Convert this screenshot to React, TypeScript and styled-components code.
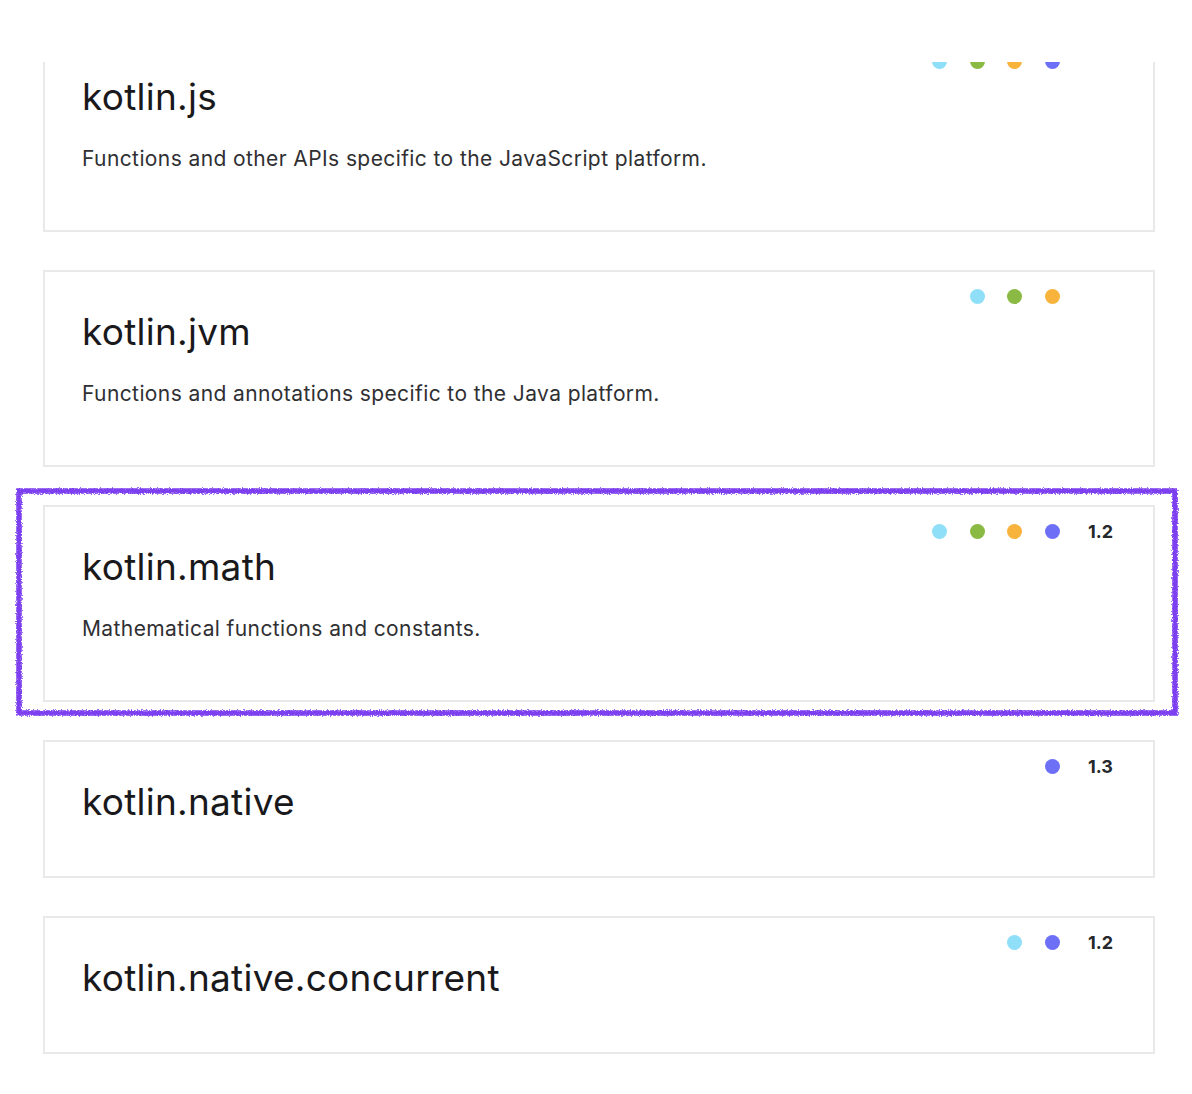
import React from "react";
import styled, { createGlobalStyle } from "styled-components";

const GlobalStyle = createGlobalStyle`
  html, body {
    margin: 0;
    padding: 0;
    background: #ffffff;
  }
  body {
    font-family: Inter, "Noto Sans", "Liberation Sans", sans-serif;
    color: #19191c;
  }
`;

const TopMask = styled.div`
  position: fixed;
  top: 0;
  left: 0;
  right: 0;
  height: 62px;
  background: #ffffff;
  z-index: 5;
`;

const Page = styled.main`
  display: flex;
  flex-direction: column;
  gap: 38px;
  padding: 35px 37px 40px 43px;
`;

const Card = styled.section`
  position: relative;
  display: flex;
  flex-direction: column;
  border: 2px solid #e9e9e9;
  padding: 14px 39px 52px 37px;
  background: #ffffff;
`;

const TopRow = styled.div`
  display: flex;
  justify-content: flex-end;
  align-items: center;
  height: 20px;
`;

const Dots = styled.div`
  display: flex;
  align-items: center;
  gap: 22.5px;
`;

const Dot = styled.span<{ $color: string }>`
  width: 15px;
  height: 15px;
  border-radius: 50%;
  background: ${(p) => p.$color};
`;

const Version = styled.span`
  width: 26px;
  margin-left: 28.5px;
  font-size: 18px;
  font-weight: 700;
  color: #27282c;
  text-align: left;
`;

const Title = styled.h2`
  margin: 4px 0 0;
  font-size: 37px;
  line-height: 44px;
  font-weight: 400;
  color: #19191c;
  letter-spacing: 0.25px;
`;

const Description = styled.p`
  margin: 25px 0 4px;
  font-size: 21px;
  line-height: 30px;
  letter-spacing: 0.4px;
  color: #303033;
`;

const Highlight = styled.svg`
  position: absolute;
  left: -29px;
  top: -19px;
  width: calc(100% + 54px);
  height: calc(100% + 35px);
  overflow: visible;
  pointer-events: none;
`;

const COLORS: Record<string, string> = {
  js: "#8fdff9",
  jvm: "#8aba44",
  common: "#f7b33c",
  native: "#6d6ff6",
};

type Pkg = {
  name: string;
  desc?: string;
  platforms: string[];
  version?: string;
  highlighted?: boolean;
};

const PACKAGES: Pkg[] = [
  {
    name: "kotlin.js",
    desc: "Functions and other APIs specific to the JavaScript platform.",
    platforms: ["js", "jvm", "common", "native"],
  },
  {
    name: "kotlin.jvm",
    desc: "Functions and annotations specific to the Java platform.",
    platforms: ["js", "jvm", "common"],
  },
  {
    name: "kotlin.math",
    desc: "Mathematical functions and constants.",
    platforms: ["js", "jvm", "common", "native"],
    version: "1.2",
    highlighted: true,
  },
  {
    name: "kotlin.native",
    platforms: ["native"],
    version: "1.3",
  },
  {
    name: "kotlin.native.concurrent",
    platforms: ["js", "native"],
    version: "1.2",
  },
];

function ScribbleBox() {
  return (
    <Highlight aria-hidden="true">
      <defs>
        <filter id="rough" x="-5%" y="-20%" width="110%" height="140%">
          <feTurbulence type="fractalNoise" baseFrequency="0.9" numOctaves="2" seed="3" result="noise" />
          <feDisplacementMap in="SourceGraphic" in2="noise" scale="4" xChannelSelector="R" yChannelSelector="G" />
        </filter>
      </defs>
      <rect
        x="3"
        y="3"
        fill="none"
        stroke="#7c3ff0"
        strokeWidth="5.5"
        filter="url(#rough)"
        style={{ width: "calc(100% - 6px)", height: "calc(100% - 6px)" }}
      />
    </Highlight>
  );
}

export default function App() {
  return (
    <>
      <GlobalStyle />
      <TopMask />
      <Page>
        {PACKAGES.map((p) => (
          <Card key={p.name}>
            <TopRow>
              <Dots>
                {p.platforms.map((pl) => (
                  <Dot key={pl} $color={COLORS[pl]} />
                ))}
              </Dots>
              <Version>{p.version ?? ""}</Version>
            </TopRow>
            <Title>{p.name}</Title>
            {p.desc && <Description>{p.desc}</Description>}
            {p.highlighted && <ScribbleBox />}
          </Card>
        ))}
      </Page>
    </>
  );
}
